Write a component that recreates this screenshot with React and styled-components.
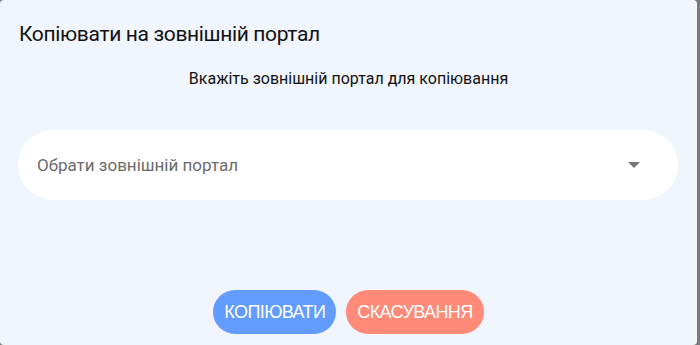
import styled, { createGlobalStyle } from 'styled-components'

const GlobalStyle = createGlobalStyle`
  html, body {
    margin: 0;
    padding: 0;
    height: 100%;
    background: #7b7b7b;
  }
  #root {
    height: 100%;
  }
`;

const Dialog = styled.div`
  box-sizing: border-box;
  width: 697px;
  height: 345px;
  background: #f1f5fe;
  border-radius: 4px;
  display: flex;
  flex-direction: column;
  font-family: Roboto, "Liberation Sans", sans-serif;
  color: #111;
`;

const Title = styled.h2`
  margin: 0;
  padding: 21px 19px 0;
  font-size: 21px;
  font-weight: 400;
  letter-spacing: -0.35px;
  line-height: 26px;
`;

const Subtitle = styled.p`
  margin: 22px 0 0;
  text-align: center;
  font-size: 16px;
  line-height: 20px;
`;

const SelectBox = styled.div`
  margin: 41px 19px 0 18px;
  height: 70px;
  border-radius: 35px;
  background: #ffffff;
  display: flex;
  align-items: center;
  justify-content: space-between;
  padding: 0 38px 0 19px;
  cursor: pointer;
`;

const Placeholder = styled.span`
  font-size: 17px;
  color: #6b6b6b;
`;

const Arrow = styled.span`
  width: 0;
  height: 0;
  border-left: 6px solid transparent;
  border-right: 6px solid transparent;
  border-top: 6px solid #757575;
`;

const Actions = styled.div`
  margin-top: auto;
  padding-bottom: 11px;
  display: flex;
  justify-content: center;
  gap: 10px;
`;

const Button = styled.button`
  height: 44px;
  border: none;
  border-radius: 22px;
  padding: 0 11px;
  background: ${p => (p.$variant === 'cancel' ? '#ff8a78' : '#639cff')};
  color: #fff;
  font-family: "Liberation Sans", Arial, sans-serif;
  font-size: 18px;
  letter-spacing: -0.6px;
  text-transform: uppercase;
  cursor: pointer;
`;

export default function App() {
  return (
    <>
      <GlobalStyle />
      <Dialog>
        <Title>Копіювати на зовнішній портал</Title>
        <Subtitle>Вкажіть зовнішній портал для копіювання</Subtitle>
        <SelectBox>
          <Placeholder>Обрати зовнішній портал</Placeholder>
          <Arrow />
        </SelectBox>
        <Actions>
          <Button>Копіювати</Button>
          <Button $variant="cancel">Скасування</Button>
        </Actions>
      </Dialog>
    </>
  )
}
